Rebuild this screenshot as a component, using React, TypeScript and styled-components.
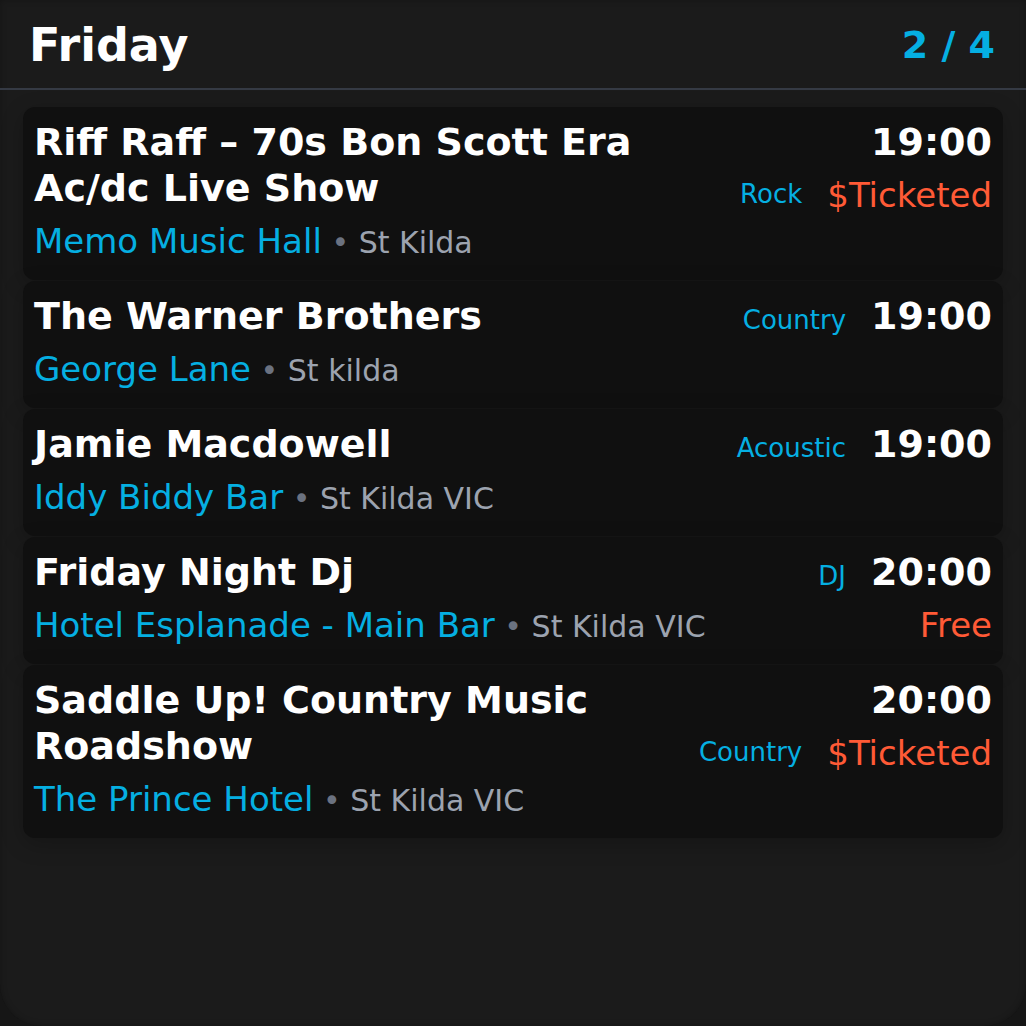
import React from "react";
import styled, { createGlobalStyle } from "styled-components";

const Global = createGlobalStyle`
  html, body {
    margin: 0;
    padding: 0;
    background: #161616;
  }
  body {
    font-family: "DejaVu Sans", "Liberation Sans", sans-serif;
  }
`;

const Screen = styled.div`
  box-sizing: border-box;
  width: 1026px;
  height: 1026px;
  background: #1b1b1b;
  border-radius: 0 0 42px 42px;
  box-shadow: inset 0 0 6px rgba(0, 0, 0, 0.25);
  display: flex;
  flex-direction: column;
  overflow: hidden;
`;

const Header = styled.header`
  height: 90px;
  box-sizing: border-box;
  padding: 0 31px 0 29px;
  display: flex;
  align-items: center;
  justify-content: space-between;
  border-bottom: 2px solid #353a44;
`;

const DayTitle = styled.h1`
  margin: 0;
  font-size: 46px;
  font-weight: 700;
  color: #ffffff;
  line-height: 1;
  padding-top: 2px;
`;

const PageCount = styled.div`
  font-size: 38px;
  font-weight: 700;
  color: #05afe2;
  line-height: 1;
  padding-top: 2px;
`;

const List = styled.div`
  padding: 17px 23px 0;
  display: flex;
  flex-direction: column;
  gap: 0;
`;

const Card = styled.div`
  background: #101010;
  border-radius: 12px;
  padding: 12px 11px 18px 11px;
  display: flex;
  align-items: flex-start;
  gap: 16px;
  box-shadow: 0 6px 22px rgba(0, 0, 0, 0.22);
  & + & {
    margin-top: 1px;
  }
`;

const Left = styled.div`
  flex: 1;
  min-width: 0;
`;

const Title = styled.div`
  font-size: 38px;
  line-height: 46px;
  font-weight: 700;
  color: #ffffff;
`;

const Venue = styled.div`
  margin-top: 9px;
  font-size: 30px;
  line-height: 42px;
  height: 42px;
  color: #9ca3af;
  white-space: nowrap;
`;

const VenueName = styled.span`
  color: #05afe2;
  font-size: 34px;
`;

const Dot = styled.span`
  color: #6b7280;
`;

const Right = styled.div`
  flex-shrink: 0;
  display: flex;
  flex-direction: column;
  align-items: flex-end;
`;

const TimeRow = styled.div`
  display: flex;
  align-items: baseline;
  justify-content: flex-end;
  gap: 25px;
  height: 46px;
`;

const PriceRow = styled.div`
  margin-top: 9px;
  display: flex;
  align-items: center;
  justify-content: flex-end;
  gap: 25px;
  height: 42px;
`;

const Time = styled.div`
  font-size: 38px;
  line-height: 46px;
  font-weight: 700;
  color: #ffffff;
`;

const Genre = styled.div<{ $lift?: boolean }>`
  font-size: 26px;
  line-height: 31px;
  color: #05afe2;
  position: relative;
  top: ${(p) => (p.$lift ? "-1px" : "0")};
`;

const Price = styled.div`
  font-size: 34px;
  line-height: 42px;
  color: #ff5a36;
`;

type Event = {
  title: string;
  venue: string;
  place: string;
  genre: string;
  time: string;
  price?: string;
  genreWithPrice: boolean;
};

const events: Event[] = [
  {
    title: "Riff Raff – 70s Bon Scott Era Ac/dc Live Show",
    venue: "Memo Music Hall",
    place: "St Kilda",
    genre: "Rock",
    time: "19:00",
    price: "$Ticketed",
    genreWithPrice: true,
  },
  {
    title: "The Warner Brothers",
    venue: "George Lane",
    place: "St kilda",
    genre: "Country",
    time: "19:00",
    genreWithPrice: false,
  },
  {
    title: "Jamie Macdowell",
    venue: "Iddy Biddy Bar",
    place: "St Kilda VIC",
    genre: "Acoustic",
    time: "19:00",
    genreWithPrice: false,
  },
  {
    title: "Friday Night Dj",
    venue: "Hotel Esplanade - Main Bar",
    place: "St Kilda VIC",
    genre: "DJ",
    time: "20:00",
    price: "Free",
    genreWithPrice: false,
  },
  {
    title: "Saddle Up! Country Music Roadshow",
    venue: "The Prince Hotel",
    place: "St Kilda VIC",
    genre: "Country",
    time: "20:00",
    price: "$Ticketed",
    genreWithPrice: true,
  },
];

function EventCard({ e }: { e: Event }) {
  return (
    <Card>
      <Left>
        <Title>{e.title}</Title>
        <Venue>
          <VenueName>{e.venue}</VenueName> <Dot>•</Dot> {e.place}
        </Venue>
      </Left>
      <Right>
        <TimeRow>
          {!e.genreWithPrice && <Genre>{e.genre}</Genre>}
          <Time>{e.time}</Time>
        </TimeRow>
        {(e.price || e.genreWithPrice) && (
          <PriceRow>
            {e.genreWithPrice && <Genre $lift>{e.genre}</Genre>}
            {e.price && <Price>{e.price}</Price>}
          </PriceRow>
        )}
      </Right>
    </Card>
  );
}

export default function App() {
  return (
    <>
      <Global />
      <Screen>
        <Header>
          <DayTitle>Friday</DayTitle>
          <PageCount>2 / 4</PageCount>
        </Header>
        <List>
          {events.map((e) => (
            <EventCard key={e.title} e={e} />
          ))}
        </List>
      </Screen>
    </>
  );
}
